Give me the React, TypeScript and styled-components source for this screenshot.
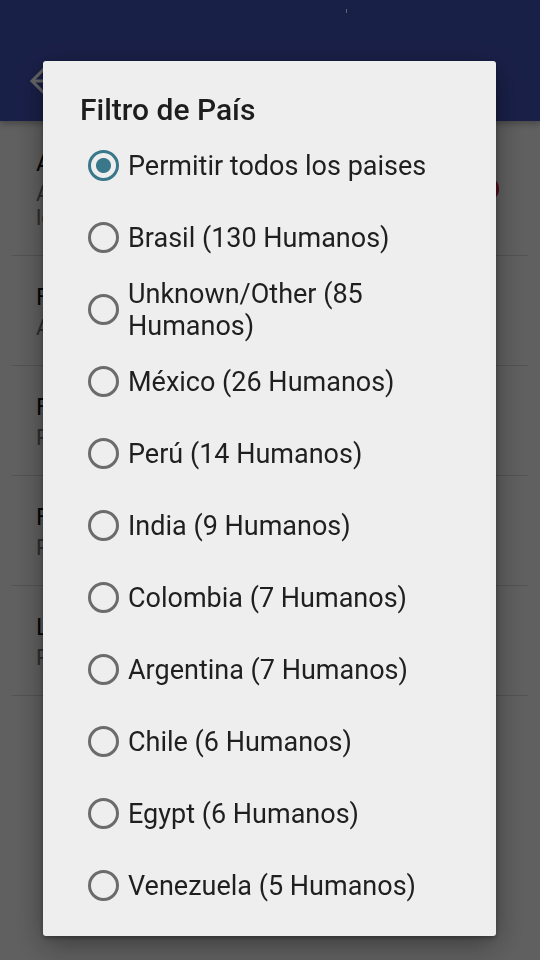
import React, { useState } from 'react';
import styled, { createGlobalStyle } from 'styled-components';

const GlobalStyle = createGlobalStyle`
  *, *::before, *::after { box-sizing: border-box; }
  html, body, #root { height: 100%; }
  body {
    margin: 0;
    overflow: hidden;
    background: #f0f0f0;
    font-family: Roboto, "Noto Sans", sans-serif;
  }
`;

const Page = styled.div`
  min-height: 100%;
  background: #f0f0f0;
`;

const Header = styled.header`
  position: relative;
  background: #4050b4;
  box-shadow: 0 3px 6px rgba(0, 0, 0, 0.25);
`;

const StatusBar = styled.div`
  display: flex;
  height: 40px;
  padding: 9px 0 0 64%;
`;

const AppBar = styled.div`
  display: flex;
  align-items: center;
  height: 81px;
  padding: 0 28px;
`;

const BackButton = styled.button`
  display: flex;
  padding: 0;
  border: 0;
  background: none;
  color: #ffffff;
`;

const Settings = styled.main`
  padding: 0 12px;
`;

const Setting = styled.section`
  display: flex;
  align-items: center;
  justify-content: space-between;
  padding: 26px 29px 25px 24px;
  border-bottom: 1px solid #cfcfcf;

  & + & {
    padding-top: 25px;
  }
`;

const SettingTitle = styled.h2`
  margin: 0 0 3px;
  font-size: 24px;
  line-height: 32px;
  font-weight: 400;
  color: #101010;
`;

const SettingNote = styled.p`
  margin: 0;
  font-size: 22px;
  line-height: 24px;
  color: #707070;
  white-space: pre-line;
`;

const Toggle = styled.input`
  appearance: none;
  width: 26px;
  height: 26px;
  margin: 0;
  border-radius: 50%;
  background: #d0204c;
`;

const Scrim = styled.div`
  position: fixed;
  inset: 0;
  display: flex;
  padding: 61px 44px 24px 43px;
  background: rgba(0, 0, 0, 0.6);
`;

const Dialog = styled.section`
  flex: 1;
  min-width: 0;
  padding: 31px 36px 0 37px;
  overflow: hidden;
  border-radius: 3px;
  background: #eeeeee;
  box-shadow: 0 8px 30px rgba(0, 0, 0, 0.4), 0 2px 4px rgba(0, 0, 0, 0.3);
`;

const DialogTitle = styled.h1`
  margin: 0;
  font-size: 30px;
  line-height: 36px;
  font-weight: 500;
  color: #1d1d1d;
`;

const Options = styled.fieldset`
  margin: 0;
  padding: 1px 0 0;
  border: 0;
`;

const Option = styled.label`
  display: flex;
  align-items: center;
  gap: 9px;
  height: 72px;
  padding-left: 8px;
  font-size: 27px;
  line-height: 32px;
  color: #1f1f1f;
`;

const OptionText = styled.span`
  padding-top: 2px;
`;

const Radio = styled.input`
  appearance: none;
  flex: none;
  width: 31px;
  height: 31px;
  margin: 0;
  border: 3px solid #6b6b6b;
  border-radius: 50%;

  &:checked {
    border-color: #39788a;
    background: radial-gradient(circle, #39788a 7px, transparent 8px);
  }
`;

const settings = [
  { title: 'A', note: 'A\nlo', toggle: true },
  { title: 'F', note: 'A' },
  { title: 'F', note: 'P' },
  { title: 'F', note: 'P' },
  { title: 'L', note: 'P' },
];

const countries = [
  'Permitir todos los paises',
  'Brasil (130 Humanos)',
  'Unknown/Other (85 Humanos)',
  'México (26 Humanos)',
  'Perú (14 Humanos)',
  'India (9 Humanos)',
  'Colombia (7 Humanos)',
  'Argentina (7 Humanos)',
  'Chile (6 Humanos)',
  'Egypt (6 Humanos)',
  'Venezuela (5 Humanos)',
];

export default function App() {
  const [selected, setSelected] = useState(countries[0]);

  return (
    <>
      <GlobalStyle />
      <Page>
        <Header>
          <StatusBar>
            <svg width="2" height="6" aria-hidden="true">
              <path d="M0 0H1V4H0Z" fill="#ffffff" />
            </svg>
          </StatusBar>
          <AppBar>
            <BackButton type="button" aria-label="Atrás">
              <svg width="30" height="30" viewBox="0 0 30 30" fill="none" stroke="currentColor" strokeWidth="3">
                <path d="M16 3L4 15L16 27M4 15H27" />
              </svg>
            </BackButton>
          </AppBar>
        </Header>
        <Settings>
          {settings.map((item, index) => (
            <Setting key={index}>
              <div>
                <SettingTitle>{item.title}</SettingTitle>
                <SettingNote>{item.note}</SettingNote>
              </div>
              {item.toggle && <Toggle type="checkbox" defaultChecked aria-label={item.title} />}
            </Setting>
          ))}
        </Settings>
      </Page>
      <Scrim>
        <Dialog role="dialog" aria-modal="true" aria-labelledby="dialog-title">
          <DialogTitle id="dialog-title">Filtro de País</DialogTitle>
          <Options aria-labelledby="dialog-title">
            {countries.map((country) => (
              <Option key={country}>
                <Radio
                  type="radio"
                  name="country"
                  checked={selected === country}
                  onChange={() => setSelected(country)}
                />
                <OptionText>{country}</OptionText>
              </Option>
            ))}
          </Options>
        </Dialog>
      </Scrim>
    </>
  );
}
